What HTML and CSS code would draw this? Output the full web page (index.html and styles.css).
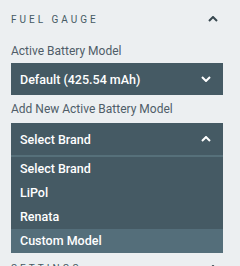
FILE: index.html
```html
<!DOCTYPE html>
<html lang="en">
<head>
<meta charset="UTF-8">
<meta name="viewport" content="width=device-width, initial-scale=1.0">
<title>Fuel Gauge</title>
<link rel="stylesheet" href="styles.css">
</head>
<body>
<div class="panel">
    <section class="section">
        <div class="section-head">
            <span class="section-title">Fuel Gauge</span>
            <svg class="chev chev-dark" width="10" height="6" viewBox="0 0 10 6"><polyline points="1,5 5,1 9,5"/></svg>
        </div>

        <label class="field-label">Active Battery Model</label>
        <div class="select">
            <span>Default (425.54 mAh)</span>
            <svg class="chev" width="10" height="6" viewBox="0 0 10 6"><polyline points="1,1 5,5 9,1"/></svg>
        </div>

        <label class="field-label">Add New Active Battery Model</label>
        <div class="dropdown">
            <div class="select open">
                <span>Select Brand</span>
                <svg class="chev" width="10" height="6" viewBox="0 0 10 6"><polyline points="1,5 5,1 9,5"/></svg>
            </div>
            <ul class="options">
                <li>Select Brand</li>
                <li>LiPol</li>
                <li>Renata</li>
                <li class="active">Custom Model</li>
            </ul>
        </div>
    </section>

    <section class="section">
        <div class="section-head">
            <span class="section-title">Settings</span>
            <svg class="chev chev-dark" width="10" height="6" viewBox="0 0 10 6"><polyline points="1,5 5,1 9,5"/></svg>
        </div>
    </section>
</div>
</body>
</html>
```

FILE: styles.css
```css
body {
    font-family: Roboto, "Liberation Sans", sans-serif;
    background-color: #eceff1;
    margin: 0;
    padding: 0;
}
.panel {
    width: 212px;
    padding-left: 11px;
}
.section {
    padding-bottom: 92px;
}
.section-head {
    display: flex;
    align-items: center;
    justify-content: space-between;
    height: 38px;
    padding-right: 5px;
}
.section-title {
    font-size: 10px;
    text-transform: uppercase;
    letter-spacing: 3px;
    color: #455a64;
}
.chev {
    fill: none;
    stroke: #ffffff;
    stroke-width: 2;
}
.chev-dark {
    stroke: #37474f;
}
.field-label {
    display: block;
    font-size: 12px;
    line-height: 16px;
    color: #4f5d68;
    margin: 5px 0 4px;
}
.select {
    display: flex;
    align-items: center;
    justify-content: space-between;
    height: 32px;
    padding: 0 12px 0 9px;
    background-color: #455a64;
    color: #ffffff;
    font-size: 12.5px;
    font-weight: 500;
}
.select + .field-label {
    margin-top: 6px;
    margin-bottom: 6px;
}
.dropdown {
    position: relative;
}
.select.open {
    border-bottom: 2px solid #56707a;
}
.options {
    position: absolute;
    left: 0;
    right: 0;
    top: 34px;
    margin: 0;
    padding: 0;
    list-style: none;
    background-color: #455a64;
    z-index: 2;
}
.options li {
    height: 24px;
    line-height: 24px;
    padding-left: 9px;
    color: #ffffff;
    font-size: 12.5px;
    font-weight: 500;
}
.options li.active {
    background-color: #546e7a;
}
```
